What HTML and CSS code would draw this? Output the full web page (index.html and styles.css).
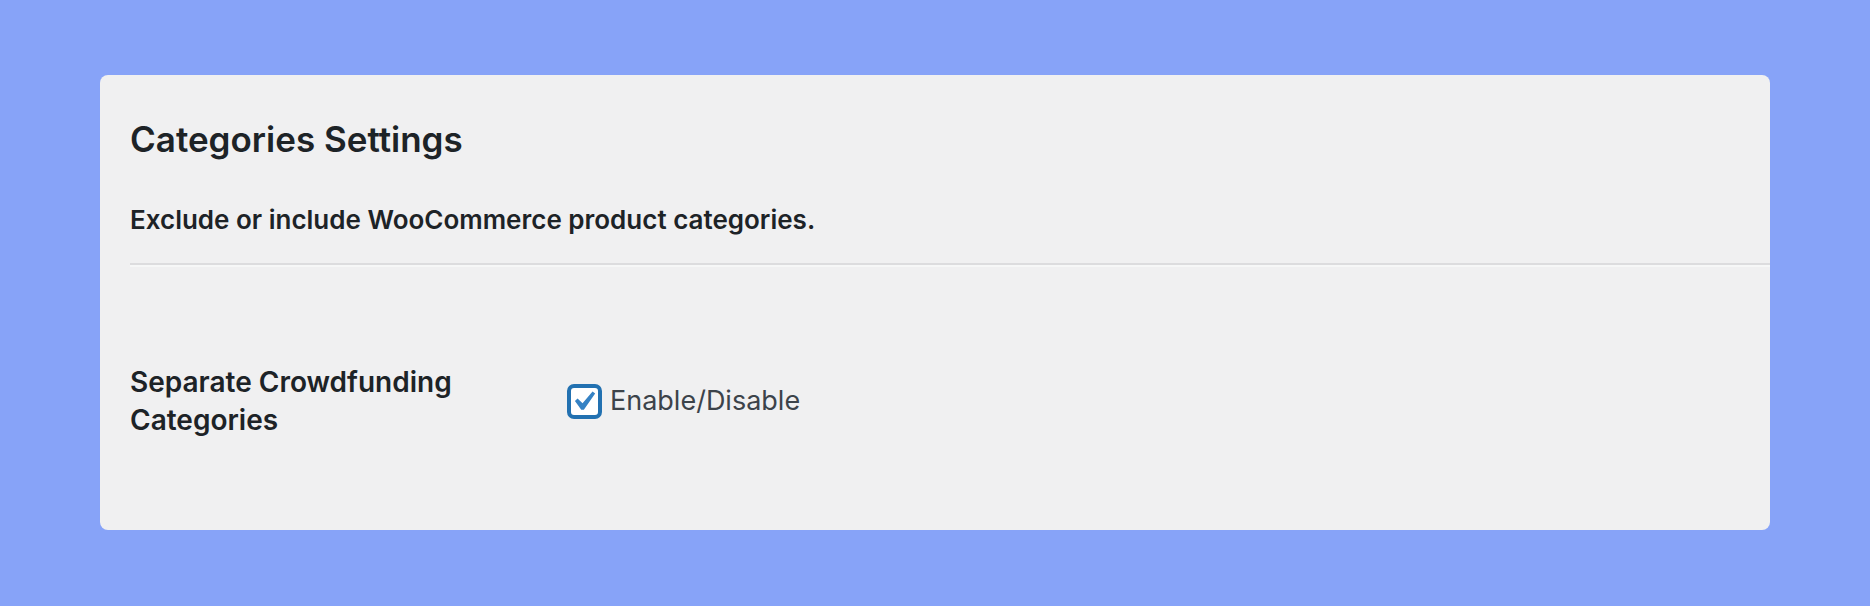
FILE: index.html
```html
<!DOCTYPE html>
<html lang="en">
<head>
<meta charset="utf-8">
<title>Categories Settings</title>
<link rel="stylesheet" href="styles.css">
</head>
<body>
<main class="card">
  <h2 class="title">Categories Settings</h2>
  <p class="desc">Exclude or include WooCommerce product categories.</p>
  <hr class="sep">
  <div class="row">
    <div class="label">Separate Crowdfunding<br>Categories</div>
    <label class="field">
      <span class="check">
        <svg viewBox="5.3 4.6 11.3 10" width="22" height="19.5"><path d="M14.83 4.89l1.34.94-5.81 8.38H9.02L5.78 9.67l1.34-1.25 2.57 2.4z" fill="#3582c4"/></svg>
      </span>
      <span class="field-text">Enable/Disable</span>
    </label>
  </div>
</main>
</body>
</html>
```

FILE: styles.css
```css
html, body {
  margin: 0;
  padding: 0;
}
body {
  background: #87a3f8;
  font-family: Inter, "Noto Sans", sans-serif;
  color: #1d2327;
  padding: 75px 100px 76px 100px;
}
.card {
  background: #f0f0f1;
  border-radius: 8px;
  height: 455px;
  box-sizing: border-box;
  padding: 46px 0 0 30px;
}
.title {
  margin: 0;
  font-size: 35px;
  line-height: 36px;
  font-weight: 600;
}
.desc {
  margin: 48px 0 0 0;
  font-size: 26px;
  line-height: 30px;
  font-weight: 600;
}
.sep {
  margin: 28px 0 0 0;
  border: 0;
  border-top: 2px solid #dcdcde;
  border-bottom: 2px solid #f6f7f7;
  height: 0;
}
.row {
  display: flex;
  align-items: center;
  margin-top: 96px;
}
.label {
  width: 437px;
  font-size: 28px;
  line-height: 38px;
  font-weight: 600;
}
.field {
  display: flex;
  align-items: center;
  gap: 8px;
}
.check {
  width: 35px;
  height: 35px;
  box-sizing: border-box;
  border: 4px solid #2271b1;
  border-radius: 7px;
  background: #fff;
  display: flex;
  align-items: center;
  justify-content: center;
}
.check svg {
  display: block;
}
.field-text {
  font-size: 27px;
  line-height: 32px;
  color: #3c434a;
}
```
